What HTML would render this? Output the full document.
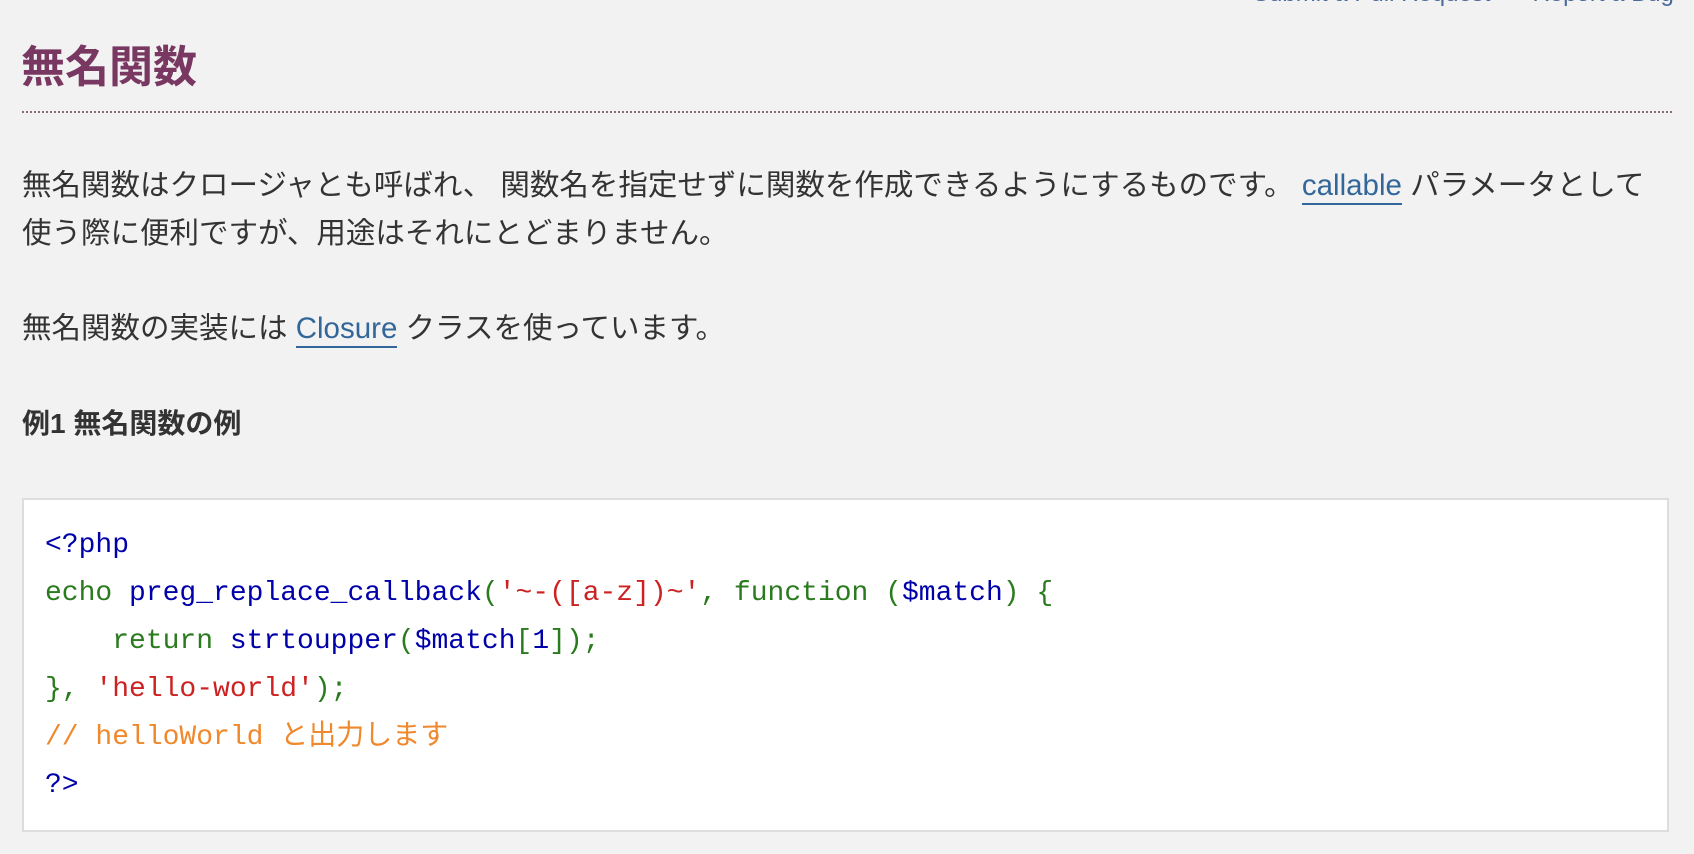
<!DOCTYPE html>
<html><head><meta charset="utf-8">
<style>
html,body{margin:0;padding:0;background:#f2f2f2;width:1694px;height:854px;overflow:hidden;position:relative}
body{font-family:"Liberation Sans","Noto Sans CJK JP",sans-serif;color:#333}
.abs{position:absolute;white-space:nowrap}
a{color:#369;text-decoration:none}
.u{border-bottom:2px solid #369;padding-bottom:1px}
h1{position:absolute;left:21px;top:38px;margin:0;font-size:44px;font-weight:bold;color:#793862;line-height:60px}
.rule{position:absolute;left:22px;top:111px;width:1650px;border-top:2px dotted #8a6b80}
p{margin:0;font-size:29.5px;line-height:48px}
pre{margin:0;font-family:"Liberation Mono","Noto Sans CJK JP",monospace;font-size:28px;line-height:48px;white-space:pre !important}
.box{position:absolute;left:22px;top:498px;width:1647px;height:334px;background:#fff;border:2px solid #ddd;box-sizing:border-box}
.k{color:#2a7a1e}.d{color:#0000aa}.s{color:#cc2222}.c{color:#f0882c}
</style></head><body>
<div class="abs" style="left:1253px;top:-20px;font-size:24px;color:#4b6a9b">Submit a Pull Request<span style="display:inline-block;width:42px"></span>Report a Bug</div>
<h1>無名関数</h1>
<div class="rule"></div>
<p class="abs" style="left:22px;top:162px">無名関数はクロージャとも呼ばれ、 関数名を指定せずに関数を作成できるようにするものです。 <a class="u" href="#">callable</a> パラメータとして</p>
<p class="abs" style="left:22px;top:210px">使う際に便利ですが、用途はそれにとどまりません。</p>
<p class="abs" style="left:22px;top:305px">無名関数の実装には <a class="u" href="#">Closure</a> クラスを使っています。</p>
<p class="abs" style="left:22px;top:400px;font-size:28px;font-weight:bold">例1 無名関数の例</p>
<div class="box"></div>
<pre class="abs" style="left:45px;top:522px"><span class="d">&lt;?php</span>
<span class="k">echo </span><span class="d">preg_replace_callback</span><span class="k">(</span><span class="s">'~-([a-z])~'</span><span class="k">, function (</span><span class="d">$match</span><span class="k">) {</span>
<span class="k">    return </span><span class="d">strtoupper</span><span class="k">(</span><span class="d">$match</span><span class="k">[</span><span class="d">1</span><span class="k">]);</span>
<span class="k">}, </span><span class="s">'hello-world'</span><span class="k">);</span>
<span class="c">// helloWorld と出力します</span>
<span class="d">?&gt;</span></pre>
</body></html>
